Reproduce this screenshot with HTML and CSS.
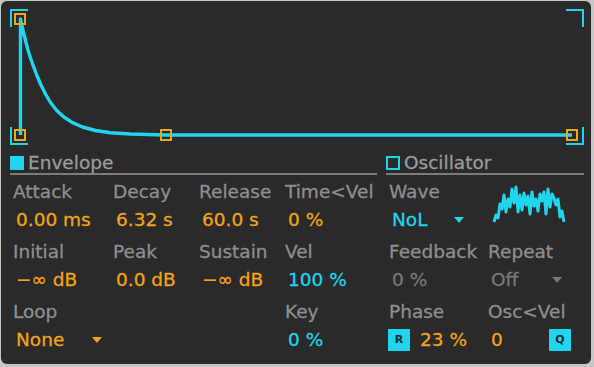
FILE: index.html
```html
<!DOCTYPE html>
<html lang="en">
<head>
    <meta charset="UTF-8">
    <title>Envelope / Oscillator</title>
    <link rel="stylesheet" href="styles.css">
</head>
<body>
    <div class="device">
        <!-- envelope graph, viewBox in page coords -->
        <svg class="env-graph" width="590" height="149" viewBox="1 1 590 149">
            <g class="bracket">
                <path d="M11 27 V10 H28"/>
                <path d="M11 127 V144 H28"/>
                <path d="M566 10 H583 V27"/>
                <path d="M566 144 H583 V127"/>
            </g>
            <path class="curve" d="M20.5 135 L20.5 19 L22 26 L24 34.5 L26 42.5 L28 50 L30.5 58 L33.5 66.5 L36.5 74.5 L40.5 84 L45.5 94 L50.5 102.5 L56.5 110.3 L63.5 116.8 L72.5 122.6 L82.5 127 L95.5 130.5 L110.5 132.7 L130.5 134 L165.5 135 L572 135"/>
            <g class="handle">
                <rect x="15" y="14" width="10" height="10"/>
                <rect x="15" y="130" width="10" height="10"/>
                <rect x="161" y="130" width="10" height="10"/>
                <rect x="567" y="130" width="10" height="10"/>
            </g>
        </svg>

        <div class="sections">
            <section class="env">
                <div class="sec-head"><span class="led on"></span>Envelope</div>
                <div class="params env-params">
                    <div class="param"><div class="label">Attack</div><div class="value">0.00 ms</div></div>
                    <div class="param"><div class="label">Decay</div><div class="value">6.32 s</div></div>
                    <div class="param"><div class="label">Release</div><div class="value">60.0 s</div></div>
                    <div class="param"><div class="label">Time&lt;Vel</div><div class="value">0 %</div></div>

                    <div class="param"><div class="label">Initial</div><div class="value">−∞ dB</div></div>
                    <div class="param"><div class="label">Peak</div><div class="value">0.0 dB</div></div>
                    <div class="param"><div class="label">Sustain</div><div class="value">−∞ dB</div></div>
                    <div class="param"><div class="label">Vel</div><div class="value cyan">100 %</div></div>

                    <div class="param"><div class="label">Loop</div>
                        <div class="value dropdown loop">None<span class="tri"></span></div></div>
                    <div class="param"></div>
                    <div class="param"></div>
                    <div class="param"><div class="label">Key</div><div class="value cyan">0 %</div></div>
                </div>
            </section>

            <section class="osc">
                <div class="sec-head"><span class="led"></span>Oscillator</div>
                <div class="params osc-params">
                    <div class="param"><div class="label">Wave</div>
                        <div class="value dropdown cyan wave">NoL<span class="tri"></span></div></div>
                    <div class="param wave-view">
                        <svg width="80" height="56" viewBox="489 178 80 56">
                            <polyline class="noise" points="495,222 497,215 499,218 501,204 503,209 505,195 507,212 509,199 511,207 513,189 515,203 517,187 519,212 521,195 523,210 525,193 527,205 529,196 531,214 533,192 535,206 537,199 539,211 541,194 543,201 545,192 547,214 549,189 551,207 553,194 555,198 557,205 559,199 561,217 563,211 565,222"/>
                        </svg>
                    </div>

                    <div class="param"><div class="label">Feedback</div><div class="value off">0 %</div></div>
                    <div class="param"><div class="label">Repeat</div>
                        <div class="value dropdown off repeat">Off<span class="tri"></span></div></div>

                    <div class="param"><div class="label">Phase</div>
                        <div class="value phase"><span class="btn">R</span>23 %</div></div>
                    <div class="param"><div class="label">Osc&lt;Vel</div>
                        <div class="value oscvel">0<span class="btn">Q</span></div></div>
                </div>
            </section>
        </div>
    </div>
</body>
</html>
```

FILE: styles.css
```css
* {
    margin: 0;
    padding: 0;
    box-sizing: border-box;
}

body {
    background: #c6c6c6;
    font-family: "DejaVu Sans", sans-serif;
    font-size: 18.5px;
    color: #8e8e8e;
    -webkit-text-stroke: 0.3px currentColor;
}

.device {
    margin: 1px 0 0 1px;
    width: 590px;
    height: 363px;
    background: #2a2a2a;
    border-radius: 6px;
    overflow: hidden;
}

.env-graph {
    display: block;
}

.bracket path {
    fill: none;
    stroke: #1fd4ec;
    stroke-width: 2;
}

.curve {
    fill: none;
    stroke: #1fd6ee;
    stroke-width: 3.4;
    stroke-linejoin: round;
}

.handle rect {
    fill: none;
    stroke: #eca51c;
    stroke-width: 2;
}

.sections {
    display: flex;
    gap: 9px;
    padding: 0 6px 0 9px;
}

.env {
    width: 367px;
}

.osc {
    width: 198px;
}

.sec-head {
    display: flex;
    align-items: center;
    gap: 4px;
    height: 25px;
    padding-top: 2px;
    line-height: 21px;
    color: #9a9a9a;
    border-bottom: 2px solid #7c7c7c;
}

.led {
    width: 14px;
    height: 14px;
    border: 2px solid #1fd4ec;
}

.led.on {
    background: #1fd4ec;
}

.params {
    display: grid;
    row-gap: 4px;
    margin-top: 3px;
    padding-left: 3px;
}

.env-params {
    grid-template-columns: 100px 86px 86px 1fr;
}

.osc-params {
    grid-template-columns: 99px 1fr;
}

.label {
    height: 28px;
    line-height: 28px;
    white-space: nowrap;
}

.value {
    height: 28px;
    line-height: 28px;
    padding-left: 3px;
    color: #f2a31a;
    white-space: nowrap;
}

.value.cyan {
    color: #1fd4ec;
}

.value.off {
    color: #777777;
}

.dropdown {
    display: flex;
    align-items: center;
    justify-content: space-between;
}

.dropdown.loop {
    width: 89px;
}

.dropdown.wave {
    width: 75px;
}

.dropdown.repeat {
    width: 74px;
}

.tri {
    width: 0;
    height: 0;
    border-left: 5px solid transparent;
    border-right: 5px solid transparent;
    border-top: 6px solid currentColor;
}

.wave-view {
    display: flex;
    align-items: center;
}

.noise {
    fill: none;
    stroke: #1fd6ee;
    stroke-width: 3;
    stroke-linejoin: round;
}

.phase {
    display: flex;
    align-items: center;
    gap: 10px;
    padding-left: 0;
    margin-left: -1px;
}

.oscvel {
    display: flex;
    align-items: center;
    justify-content: space-between;
    width: 83px;
}

.btn {
    display: flex;
    align-items: center;
    justify-content: center;
    width: 22px;
    height: 22px;
    background: #1fd4ec;
    color: #1c2a2e;
    font-size: 11px;
    font-weight: bold;
    -webkit-text-stroke: 0;
}
```
